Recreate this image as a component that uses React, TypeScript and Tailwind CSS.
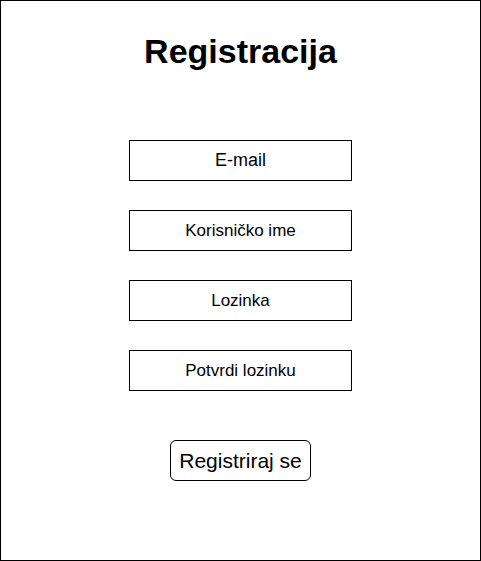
import * as React from 'react';

const fields = [
  { label: 'E-mail', size: 'text-[18px]' },
  { label: 'Korisničko ime', size: 'text-[17px]' },
  { label: 'Lozinka', size: 'text-[17px]' },
  { label: 'Potvrdi lozinku', size: 'text-[17px]' },
];

const Field: React.FC<{ label: string; size: string }> = ({ label, size }) => {
  return (
    <div className={`flex items-center justify-center w-[223px] h-[41px] border border-black text-black ${size}`}>
      {label}
    </div>
  );
};

export default function App() {
  return (
    <div
      className="w-[481px] h-[561px] border border-black bg-white flex flex-col items-center"
      style={{ fontFamily: '"Liberation Sans", Arial, sans-serif' }}
    >
      <h1 className="mt-[30px] h-[40px] leading-[40px] text-[34px] font-bold text-black">Registracija</h1>
      <div className="mt-[69px] flex flex-col gap-[29px]">
        {fields.map((f) => (
          <Field key={f.label} label={f.label} size={f.size} />
        ))}
      </div>
      <button className="mt-[49px] w-[141px] h-[41px] border border-black rounded-md text-[21px] text-black bg-white">
        Registriraj se
      </button>
    </div>
  );
}
